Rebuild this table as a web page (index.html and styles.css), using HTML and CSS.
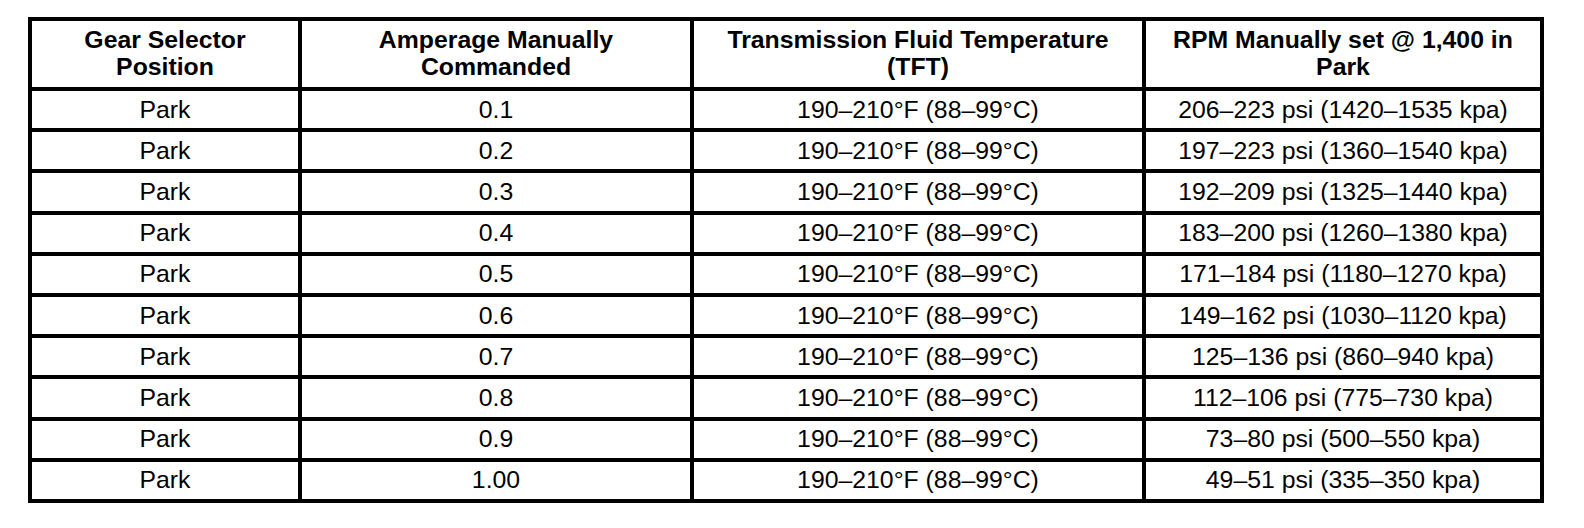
FILE: index.html
```html
<!DOCTYPE html>
<html lang="en">
<head>
    <meta charset="UTF-8">
    <meta name="viewport" content="width=device-width, initial-scale=1.0">
    <title>Line Pressure Specifications</title>
    <link rel="stylesheet" href="styles.css">
</head>
<body>
    <div class="page">
        <table class="spec-table">
            <colgroup>
                <col class="col-gear">
                <col class="col-amp">
                <col class="col-tft">
                <col class="col-rpm">
            </colgroup>
            <thead>
                <tr>
                    <th>Gear Selector Position</th>
                    <th>Amperage Manually Commanded</th>
                    <th>Transmission Fluid Temperature (TFT)</th>
                    <th>RPM Manually set @ 1,400 in Park</th>
                </tr>
            </thead>
            <tbody>
                <tr><td>Park</td><td>0.1</td><td>190–210°F (88–99°C)</td><td>206–223 psi (1420–1535 kpa)</td></tr>
                <tr><td>Park</td><td>0.2</td><td>190–210°F (88–99°C)</td><td>197–223 psi (1360–1540 kpa)</td></tr>
                <tr><td>Park</td><td>0.3</td><td>190–210°F (88–99°C)</td><td>192–209 psi (1325–1440 kpa)</td></tr>
                <tr><td>Park</td><td>0.4</td><td>190–210°F (88–99°C)</td><td>183–200 psi (1260–1380 kpa)</td></tr>
                <tr><td>Park</td><td>0.5</td><td>190–210°F (88–99°C)</td><td>171–184 psi (1180–1270 kpa)</td></tr>
                <tr><td>Park</td><td>0.6</td><td>190–210°F (88–99°C)</td><td>149–162 psi (1030–1120 kpa)</td></tr>
                <tr><td>Park</td><td>0.7</td><td>190–210°F (88–99°C)</td><td>125–136 psi (860–940 kpa)</td></tr>
                <tr><td>Park</td><td>0.8</td><td>190–210°F (88–99°C)</td><td>112–106 psi (775–730 kpa)</td></tr>
                <tr><td>Park</td><td>0.9</td><td>190–210°F (88–99°C)</td><td>73–80 psi (500–550 kpa)</td></tr>
                <tr><td>Park</td><td>1.00</td><td>190–210°F (88–99°C)</td><td>49–51 psi (335–350 kpa)</td></tr>
            </tbody>
        </table>
    </div>
</body>
</html>
```

FILE: styles.css
```css
body {
    margin: 0;
    background-color: white;
    color: black;
    font-family: "Liberation Sans", Arial, sans-serif;
}

.page {
    padding: 17px 0 0 28px;
}

.spec-table {
    width: 1516px;
    table-layout: fixed;
    border-collapse: separate;
    border-spacing: 0;
    border-top: 4px solid black;
    border-left: 4px solid black;
    font-size: 24.8px;
}

.col-gear {
    width: 270px;
}

.col-amp {
    width: 392px;
}

.col-tft {
    width: 452px;
}

.col-rpm {
    width: 398px;
}

.spec-table th,
.spec-table td {
    box-sizing: border-box;
    padding: 0 10px;
    border-right: 4px solid black;
    border-bottom: 4px solid black;
    text-align: center;
    vertical-align: middle;
}

.spec-table th {
    font-weight: bold;
    line-height: 26.6px;
}

.spec-table thead tr {
    height: 70px;
}

.spec-table tbody tr {
    height: 41.2px;
}
```
